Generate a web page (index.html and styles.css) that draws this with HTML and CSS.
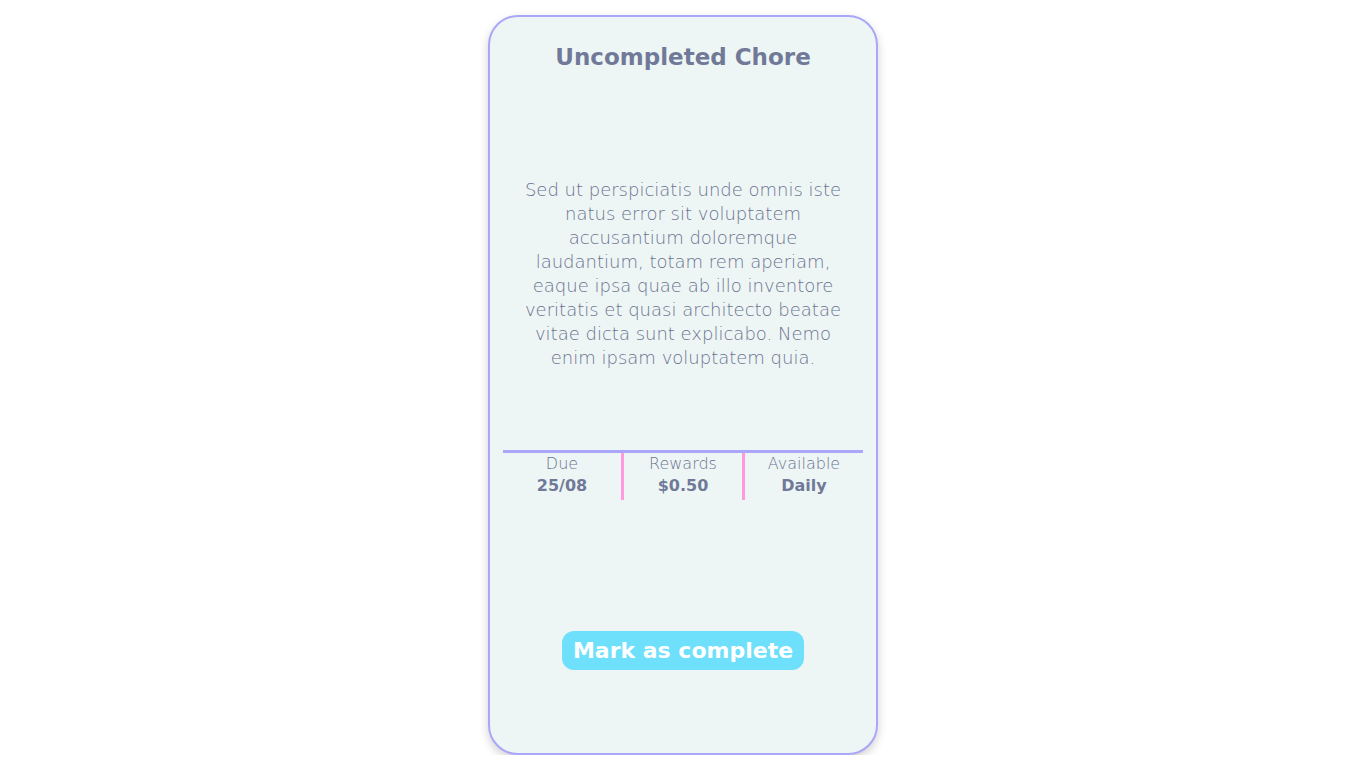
FILE: index.html
```html
<!DOCTYPE html>
<html lang="en">
<head>
    <meta charset="UTF-8">
    <meta name="viewport" content="width=device-width, initial-scale=1.0">
    <title>Chore</title>
    <link rel="stylesheet" href="styles.css">
</head>
<body>
    <div class="page">
        <div class="chore-card">
            <h1 class="chore-title">Uncompleted Chore</h1>
            <p class="chore-desc">Sed ut perspiciatis unde omnis iste natus error sit voluptatem accusantium doloremque laudantium, totam rem aperiam, eaque ipsa quae ab illo inventore veritatis et quasi architecto beatae vitae dicta sunt explicabo. Nemo enim ipsam voluptatem quia.</p>
            <div class="chore-stats">
                <div class="stat">
                    <span class="stat-label">Due</span>
                    <span class="stat-value">25/08</span>
                </div>
                <div class="stat">
                    <span class="stat-label">Rewards</span>
                    <span class="stat-value">$0.50</span>
                </div>
                <div class="stat">
                    <span class="stat-label">Available</span>
                    <span class="stat-value">Daily</span>
                </div>
            </div>
            <div class="action">
                <button class="complete-btn">Mark as complete</button>
            </div>
        </div>
    </div>
</body>
</html>
```

FILE: styles.css
```css
body {
    margin: 0;
    padding: 0;
    font-family: "DejaVu Sans", "Noto Sans", sans-serif;
    background-color: #ffffff;
    color: #737c99;
}
.page {
    display: flex;
    justify-content: center;
    padding-top: 15px;
}
.chore-card {
    box-sizing: border-box;
    width: 390px;
    height: 740px;
    padding: 0 13px;
    background-color: #eef6f5;
    border: 2px solid #aaa6f8;
    border-radius: 30px;
    box-shadow: 0 4px 10px rgba(0, 0, 0, 0.18);
    display: flex;
    flex-direction: column;
}
.chore-title {
    margin: 25px 0 0;
    font-size: 23px;
    line-height: 30px;
    font-weight: bold;
    text-align: center;
    color: #707a98;
}
.chore-desc {
    margin: 106px auto 0;
    width: 322px;
    font-size: 18px;
    line-height: 24px;
    font-weight: 300;
    text-align: center;
    color: #6a7390;
}
.chore-stats {
    margin-top: 80px;
    display: flex;
    border-top: 3px solid #aaa6f8;
}
.stat {
    flex: 1;
    display: flex;
    flex-direction: column;
    align-items: center;
    height: 47px;
    font-size: 16px;
    line-height: 22px;
}
.stat + .stat {
    border-left: 3px solid #ff9ade;
}
.stat-label {
    font-weight: 300;
    color: #6a7390;
}
.stat-value {
    font-weight: bold;
    color: #707a98;
}
.action {
    margin-top: 131px;
    display: flex;
    justify-content: center;
}
.complete-btn {
    font-family: inherit;
    font-size: 22px;
    font-weight: bold;
    color: #ffffff;
    background-color: #6ee0fc;
    border: none;
    border-radius: 12px;
    height: 39px;
    padding: 0 11px;
}
```
